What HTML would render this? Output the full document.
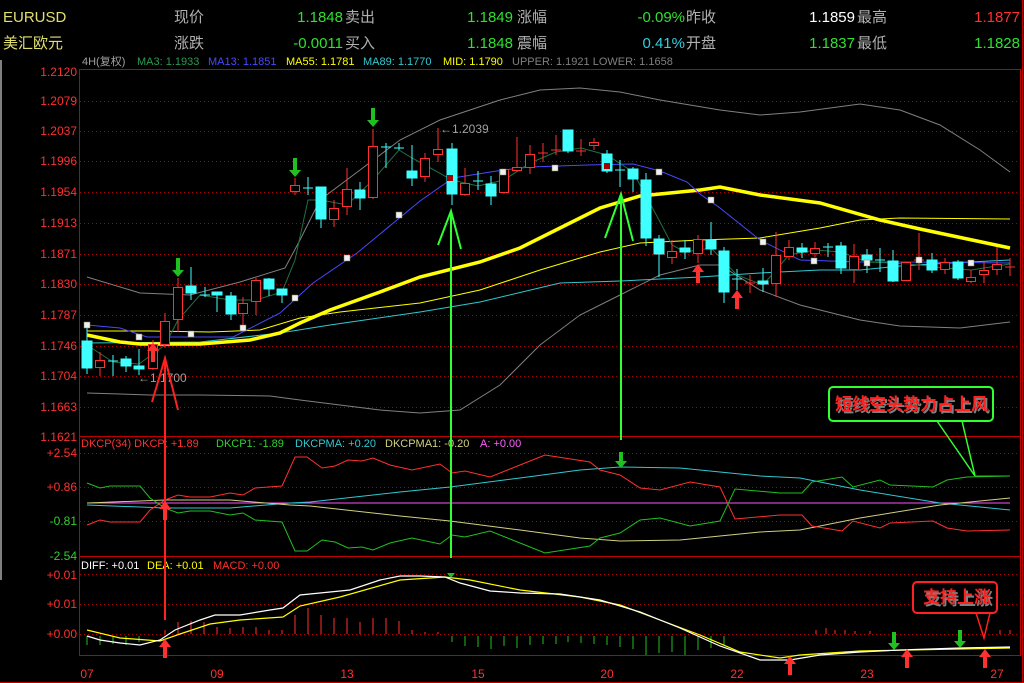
<!DOCTYPE html>
<html><head><meta charset="utf-8"><style>
html,body{margin:0;padding:0;background:#000;width:1024px;height:683px;overflow:hidden}
svg{display:block}
text{font-family:"Liberation Sans","Noto Sans CJK SC",sans-serif}
</style></head><body>
<svg width="1024" height="683" viewBox="0 0 1024 683" xmlns="http://www.w3.org/2000/svg">
<rect width="1024" height="683" fill="#000"/>
<line x1="1" y1="60" x2="1" y2="580" stroke="#808080" stroke-width="2"/>
<!-- header -->
<g font-size="15">
<text x="3" y="22" fill="#e0e070">EURUSD</text>
<text x="174" y="22" fill="#b0b0b0">现价</text>
<text x="343" y="22" fill="#30e030" text-anchor="end">1.1848</text>
<text x="345" y="22" fill="#b0b0b0">卖出</text>
<text x="513" y="22" fill="#30e030" text-anchor="end">1.1849</text>
<text x="517" y="22" fill="#b0b0b0">涨幅</text>
<text x="685" y="22" fill="#30e030" text-anchor="end">-0.09%</text>
<text x="686" y="22" fill="#b0b0b0">昨收</text>
<text x="855" y="22" fill="#ffffff" text-anchor="end">1.1859</text>
<text x="857" y="22" fill="#b0b0b0">最高</text>
<text x="1020" y="22" fill="#ff3030" text-anchor="end">1.1877</text>
<text x="3" y="48" fill="#e0e070">美汇欧元</text>
<text x="174" y="48" fill="#b0b0b0">涨跌</text>
<text x="343" y="48" fill="#30e030" text-anchor="end">-0.0011</text>
<text x="345" y="48" fill="#b0b0b0">买入</text>
<text x="513" y="48" fill="#30e030" text-anchor="end">1.1848</text>
<text x="517" y="48" fill="#b0b0b0">震幅</text>
<text x="685" y="48" fill="#30d0e0" text-anchor="end">0.41%</text>
<text x="686" y="48" fill="#b0b0b0">开盘</text>
<text x="855" y="48" fill="#30e030" text-anchor="end">1.1837</text>
<text x="857" y="48" fill="#b0b0b0">最低</text>
<text x="1020" y="48" fill="#30e030" text-anchor="end">1.1828</text>
</g>
<g font-size="11">
<text x="82" y="65" fill="#a0a0a0">4H(复权)</text>
<text x="137" y="65" fill="#2a9a50">MA3: 1.1933</text>
<text x="208" y="65" fill="#4848ff">MA13: 1.1851</text>
<text x="286" y="65" fill="#ffff00">MA55: 1.1781</text>
<text x="363" y="65" fill="#30c8d0">MA89: 1.1770</text>
<text x="443" y="65" fill="#ffff00">MID: 1.1790</text>
<text x="512" y="65" fill="#808080">UPPER: 1.1921  LOWER: 1.1658</text>
</g>
<!-- frames -->
<g stroke="#c00000" fill="none" stroke-width="1">
<rect x="79.5" y="69.5" width="941" height="586"/>
<line x1="79" y1="436.5" x2="1021" y2="436.5"/>
<line x1="79" y1="556.5" x2="1021" y2="556.5"/>
<line x1="0" y1="682.5" x2="1024" y2="682.5"/>
<line x1="1022.5" y1="0" x2="1022.5" y2="683"/>
</g>
<g stroke="#b00000" stroke-dasharray="1,3" stroke-width="1">
<line x1="80" y1="101.5" x2="1020" y2="101.5"/><line x1="80" y1="131.5" x2="1020" y2="131.5"/>
<line x1="80" y1="161.5" x2="1020" y2="161.5"/><line x1="80" y1="192.5" x2="1020" y2="192.5"/>
<line x1="80" y1="223.5" x2="1020" y2="223.5"/><line x1="80" y1="254.5" x2="1020" y2="254.5"/>
<line x1="80" y1="284.5" x2="1020" y2="284.5"/><line x1="80" y1="315.5" x2="1020" y2="315.5"/>
<line x1="80" y1="346.5" x2="1020" y2="346.5"/><line x1="80" y1="376.5" x2="1020" y2="376.5"/>
<line x1="80" y1="407.5" x2="1020" y2="407.5"/>
<line x1="80" y1="453.5" x2="1020" y2="453.5"/><line x1="80" y1="487.5" x2="1020" y2="487.5"/>
<line x1="80" y1="521.5" x2="1020" y2="521.5"/>
<line x1="80" y1="574.5" x2="1020" y2="574.5"/><line x1="80" y1="604.5" x2="1020" y2="604.5"/>
<line x1="80" y1="634.5" x2="1020" y2="634.5"/>
</g>
<g font-size="12" fill="#ff3030" text-anchor="end">
<text x="77" y="76">1.2120</text><text x="77" y="105">1.2079</text><text x="77" y="135">1.2037</text>
<text x="77" y="165">1.1996</text><text x="77" y="196">1.1954</text><text x="77" y="227">1.1913</text>
<text x="77" y="258">1.1871</text><text x="77" y="288">1.1830</text><text x="77" y="319">1.1787</text>
<text x="77" y="350">1.1746</text><text x="77" y="380">1.1704</text><text x="77" y="411">1.1663</text>
<text x="77" y="441">1.1621</text>
<text x="77" y="457">+2.54</text><text x="77" y="491">+0.86</text>
<text x="77" y="525" fill="#30d030">-0.81</text><text x="77" y="560" fill="#30d030">-2.54</text>
<text x="77" y="579">+0.01</text><text x="77" y="608">+0.01</text><text x="77" y="638">+0.00</text>
</g>
<g font-size="12" fill="#ff3030" text-anchor="middle">
<text x="87" y="678">07</text><text x="217" y="678">09</text><text x="347" y="678">13</text>
<text x="478" y="678">15</text><text x="607" y="678">20</text><text x="737" y="678">22</text>
<text x="867" y="678">23</text><text x="997" y="678">27</text>
</g>
<!-- bands -->
<g fill="none" stroke-width="1">
<polyline stroke="#808080" points="87,277 140,293 190,295 240,282 285,268 300,240 320,200 360,170 400,140 440,120 500,100 540,90 580,88 620,92 660,100 720,110 760,115 800,112 860,104 900,110 940,125 980,150 1010,172"/>
<polyline stroke="#808080" points="87,393 150,395 200,395 270,396 300,400 380,410 420,413 460,410 500,385 540,345 580,315 620,295 660,275 700,265 720,265 760,290 800,305 860,320 900,326 960,328 1010,322"/>
<polyline stroke="#30c8d0" points="87,343 200,342 280,333 330,325 420,312 480,302 560,283 620,281 700,277 760,273 820,270 860,270 900,266 950,263 1010,260"/>
<polyline stroke="#ffff00" points="87,331 150,331 210,332 260,330 300,318 340,312 420,303 480,290 540,270 600,252 640,243 700,240 760,238 820,228 860,220 900,218 1010,219"/>
<polyline stroke="#ffff00" stroke-width="3.5" points="87,335 120,342 140,344 200,344 250,340 280,333 300,323 330,310 380,292 420,277 480,262 520,248 560,228 600,208 640,196 700,190 720,187 760,195 820,203 880,220 920,229 1010,248"/>
<polyline stroke="#4848ff" points="87,325 120,328 147,337 233,337 280,313 313,283 357,253 420,201 453,178 503,170 530,167 587,165 633,164 660,171 687,182 700,194 720,208 760,240 800,260 860,262 907,262 1010,263"/>
<polyline stroke="#207040" points="87,345 113,362 139,364 165,345 178,320 200,295 230,300 256,300 282,292 295,260 308,200 321,200 347,205 373,180 399,150 412,158 425,165 452,180 478,186 504,180 530,163 556,152 581,148 607,155 633,172 646,196 659,220 672,245 685,252 711,248 737,275 763,285 776,270 789,255 815,250 841,252 867,262 893,263 919,265 945,268 971,270 997,266 1010,264"/>
</g>
<!-- candles -->
<g stroke-width="1">
<g stroke="#40ffff" fill="#40ffff">
<line x1="87" y1="327" x2="87" y2="374"/><rect x="82" y="341" width="10" height="27"/>
<line x1="113" y1="355" x2="113" y2="376"/><line x1="108" y1="361" x2="118" y2="361"/>
<line x1="126" y1="356" x2="126" y2="372"/><rect x="121" y="359" width="10" height="7"/>
<line x1="139" y1="349" x2="139" y2="375"/><rect x="134" y="366" width="10" height="3"/>
<line x1="191" y1="267" x2="191" y2="300"/><rect x="186" y="286" width="10" height="7"/>
<line x1="205" y1="287" x2="205" y2="297"/><line x1="200" y1="295" x2="210" y2="295"/>
<line x1="217" y1="292" x2="217" y2="312"/><rect x="212" y="292" width="10" height="3"/>
<line x1="231" y1="292" x2="231" y2="320"/><rect x="226" y="296" width="10" height="18"/>
<line x1="269" y1="278" x2="269" y2="296"/><rect x="264" y="279" width="10" height="10"/>
<line x1="282" y1="289" x2="282" y2="303"/><rect x="277" y="289" width="10" height="6"/>
<line x1="308" y1="177" x2="308" y2="195"/><line x1="303" y1="188" x2="313" y2="188"/>
<line x1="321" y1="187" x2="321" y2="228"/><rect x="316" y="187" width="10" height="32"/>
<line x1="360" y1="182" x2="360" y2="210"/><rect x="355" y="190" width="10" height="8"/>
<line x1="386" y1="143" x2="386" y2="168"/><line x1="381" y1="147" x2="391" y2="147"/>
<line x1="399" y1="143" x2="399" y2="150"/><line x1="394" y1="148" x2="404" y2="148"/>
<line x1="412" y1="145" x2="412" y2="186"/><rect x="407" y="171" width="10" height="7"/>
<line x1="452" y1="143" x2="452" y2="205"/><rect x="447" y="149" width="10" height="45"/>
<line x1="478" y1="171" x2="478" y2="190"/><line x1="473" y1="181" x2="483" y2="181"/>
<line x1="491" y1="176" x2="491" y2="205"/><rect x="486" y="184" width="10" height="12"/>
<line x1="568" y1="130" x2="568" y2="153"/><rect x="563" y="130" width="10" height="21"/>
<line x1="607" y1="150" x2="607" y2="173"/><rect x="602" y="154" width="10" height="17"/>
<line x1="620" y1="160" x2="620" y2="187"/><line x1="615" y1="170" x2="625" y2="170"/>
<line x1="633" y1="167" x2="633" y2="192"/><rect x="628" y="169" width="10" height="10"/>
<line x1="646" y1="173" x2="646" y2="246"/><rect x="641" y="180" width="10" height="58"/>
<line x1="659" y1="235" x2="659" y2="277"/><rect x="654" y="239" width="10" height="15"/>
<line x1="685" y1="240" x2="685" y2="259"/><rect x="680" y="248" width="10" height="4"/>
<line x1="711" y1="222" x2="711" y2="255"/><rect x="706" y="240" width="10" height="9"/>
<line x1="724" y1="247" x2="724" y2="303"/><rect x="719" y="251" width="10" height="41"/>
<line x1="737" y1="269" x2="737" y2="290"/><line x1="732" y1="279" x2="742" y2="279"/>
<line x1="763" y1="268" x2="763" y2="292"/><rect x="758" y="281" width="10" height="3"/>
<line x1="802" y1="243" x2="802" y2="258"/><rect x="797" y="248" width="10" height="4"/>
<line x1="828" y1="243" x2="828" y2="257"/><line x1="823" y1="247" x2="833" y2="247"/>
<line x1="841" y1="242" x2="841" y2="274"/><rect x="836" y="246" width="10" height="22"/>
<line x1="867" y1="249" x2="867" y2="273"/><rect x="862" y="255" width="10" height="5"/>
<line x1="880" y1="248" x2="880" y2="272"/><line x1="875" y1="260" x2="885" y2="260"/>
<line x1="893" y1="250" x2="893" y2="282"/><rect x="888" y="261" width="10" height="20"/>
<line x1="932" y1="253" x2="932" y2="273"/><rect x="927" y="260" width="10" height="10"/>
<line x1="958" y1="260" x2="958" y2="280"/><rect x="953" y="262" width="10" height="16"/>
</g>
<g stroke="#ff3030" fill="#000">
<line x1="100" y1="352" x2="100" y2="376"/><rect x="95.5" y="360.5" width="9" height="7"/>
<line x1="153" y1="340" x2="153" y2="370"/><rect x="148.5" y="344.5" width="9" height="24"/>
<line x1="165" y1="313" x2="165" y2="348"/><rect x="160.5" y="321.5" width="9" height="23"/>
<line x1="178" y1="278" x2="178" y2="332"/><rect x="173.5" y="287.5" width="9" height="32"/>
<line x1="243" y1="297" x2="243" y2="327"/><rect x="238.5" y="303.5" width="9" height="10"/>
<line x1="256" y1="278" x2="256" y2="315"/><rect x="251.5" y="280.5" width="9" height="21"/>
<line x1="295" y1="178" x2="295" y2="195"/><rect x="290.5" y="185.5" width="9" height="6"/>
<line x1="334" y1="200" x2="334" y2="227"/><rect x="329.5" y="208.5" width="9" height="11"/>
<line x1="347" y1="168" x2="347" y2="215"/><rect x="342.5" y="189.5" width="9" height="17"/>
<line x1="373" y1="129" x2="373" y2="199"/><rect x="368.5" y="146.5" width="9" height="51"/>
<line x1="425" y1="153" x2="425" y2="182"/><rect x="420.5" y="158.5" width="9" height="18"/>
<line x1="438" y1="128" x2="438" y2="162"/><rect x="433.5" y="149.5" width="9" height="5"/>
<line x1="465" y1="168" x2="465" y2="196"/><rect x="460.5" y="183.5" width="9" height="11"/>
<line x1="504" y1="169" x2="504" y2="194"/><rect x="499.5" y="169.5" width="9" height="23"/>
<line x1="517" y1="137" x2="517" y2="172"/><rect x="512.5" y="167.5" width="9" height="3"/>
<line x1="530" y1="145" x2="530" y2="174"/><rect x="525.5" y="154.5" width="9" height="13"/>
<line x1="543" y1="143" x2="543" y2="162"/><line x1="538" y1="153" x2="548" y2="153"/>
<line x1="556" y1="135" x2="556" y2="155"/><line x1="551" y1="150" x2="561" y2="150"/>
<line x1="581" y1="139" x2="581" y2="156"/><line x1="576" y1="151" x2="586" y2="151"/>
<line x1="594" y1="138" x2="594" y2="150"/><rect x="589.5" y="142.5" width="9" height="3"/>
<line x1="672" y1="240" x2="672" y2="264"/><rect x="667.5" y="251.5" width="9" height="6"/>
<line x1="698" y1="235" x2="698" y2="263"/><rect x="693.5" y="239.5" width="9" height="14"/>
<line x1="750" y1="275" x2="750" y2="293"/><line x1="745" y1="283" x2="755" y2="283"/>
<line x1="776" y1="232" x2="776" y2="297"/><rect x="771.5" y="255.5" width="9" height="28"/>
<line x1="789" y1="240" x2="789" y2="260"/><rect x="784.5" y="247.5" width="9" height="9"/>
<line x1="815" y1="242" x2="815" y2="257"/><rect x="810.5" y="248.5" width="9" height="5"/>
<line x1="854" y1="244" x2="854" y2="283"/><rect x="849.5" y="256.5" width="9" height="13"/>
<line x1="906" y1="262" x2="906" y2="281"/><rect x="901.5" y="262.5" width="9" height="18"/>
<line x1="919" y1="233" x2="919" y2="270"/><line x1="914" y1="260" x2="924" y2="260"/>
<line x1="945" y1="258" x2="945" y2="274"/><rect x="940.5" y="262.5" width="9" height="7"/>
<line x1="971" y1="270" x2="971" y2="283"/><rect x="966.5" y="277.5" width="9" height="4"/>
<line x1="984" y1="262" x2="984" y2="283"/><rect x="979.5" y="270.5" width="9" height="4"/>
<line x1="997" y1="247" x2="997" y2="275"/><rect x="992.5" y="264.5" width="9" height="5"/>
<line x1="1010" y1="258" x2="1010" y2="276"/><line x1="1005" y1="267" x2="1015" y2="267"/>
</g>
</g>
<!-- SAR squares -->
<g fill="#f0f0f0" stroke="#808060" stroke-width="0.5">
<rect x="84" y="322" width="6" height="6"/><rect x="136" y="334" width="6" height="6"/>
<rect x="188" y="331" width="6" height="6"/><rect x="240" y="325" width="6" height="6"/>
<rect x="292" y="295" width="6" height="6"/><rect x="344" y="255" width="6" height="6"/>
<rect x="396" y="212" width="6" height="6"/><rect x="500" y="169" width="6" height="6"/>
<rect x="552" y="165" width="6" height="6"/><rect x="656" y="169" width="6" height="6"/>
<rect x="708" y="197" width="6" height="6"/><rect x="760" y="239" width="6" height="6"/>
<rect x="811" y="258" width="6" height="6"/><rect x="864" y="260" width="6" height="6"/>
<rect x="916" y="257" width="6" height="6"/><rect x="968" y="260" width="6" height="6"/>
</g>
<rect x="447" y="175" width="6" height="6" fill="#a00000"/><rect x="604" y="163" width="6" height="6" fill="#a00000"/>
<g font-size="12" fill="#a0a0a0">
<text x="138" y="382">←1.1700</text><text x="440" y="133">←1.2039</text>
</g>
<!-- DKCP panel -->
<g font-size="11">
<text x="81" y="447" fill="#ff3030">DKCP(34) DKCP: +1.89</text>
<text x="216" y="447" fill="#30d030">DKCP1: -1.89</text>
<text x="295" y="447" fill="#30c8d0">DKCPMA: +0.20</text>
<text x="385" y="447" fill="#d0d080">DKCPMA1: -0.20</text>
<text x="480" y="447" fill="#ff60ff">A: +0.00</text>
</g>
<g fill="none" stroke-width="1">
<line x1="87" y1="503" x2="1010" y2="503" stroke="#ff50ff"/>
<polyline stroke="#30c8d0" points="87,505 165,508 230,508 290,503 310,502 400,492 450,487 520,478 580,470 620,467 680,468 760,476 800,478 860,490 940,503 1010,510"/>
<polyline stroke="#d0d080" points="87,503 165,500 230,500 290,505 310,506 400,516 450,521 520,530 580,538 620,541 680,540 760,532 800,530 860,518 940,505 1010,498"/>
<polyline stroke="#ff3030" points="87,525 100,520 110,522 140,522 150,510 165,500 178,495 190,497 210,497 230,493 243,495 255,488 282,486 295,457 307,457 322,468 335,466 348,460 362,461 373,458 390,465 412,470 440,464 452,473 465,471 490,477 520,465 545,455 590,462 600,470 620,475 640,488 660,490 690,482 720,487 735,519 780,515 802,515 812,526 842,531 853,521 880,528 890,523 933,521 947,528 967,531 1010,530"/>
<polyline stroke="#20c020" points="87,483 100,488 110,486 140,486 150,498 165,508 178,513 190,511 210,511 230,515 243,513 255,520 282,522 295,551 307,551 322,540 335,542 348,548 362,547 373,550 390,543 412,538 440,544 452,535 465,537 490,531 520,543 545,553 590,546 600,538 620,533 640,520 660,518 690,526 720,521 735,489 780,493 802,493 812,482 842,477 853,487 880,480 890,485 933,487 947,480 967,477 1010,476"/>
</g>
<!-- MACD panel -->
<g font-size="11">
<text x="81" y="569" fill="#ffffff">DIFF: +0.01</text>
<text x="147" y="569" fill="#ffff00">DEA: +0.01</text>
<text x="213" y="569" fill="#ff3030">MACD: +0.00</text>
</g>
<g stroke-width="1">
<g stroke="#ff3030">
<line x1="165" y1="634" x2="165" y2="630"/><line x1="178" y1="634" x2="178" y2="622"/><line x1="191" y1="634" x2="191" y2="621"/>
<line x1="204" y1="634" x2="204" y2="622"/><line x1="217" y1="634" x2="217" y2="627"/><line x1="230" y1="634" x2="230" y2="628"/>
<line x1="243" y1="634" x2="243" y2="627"/><line x1="256" y1="634" x2="256" y2="627"/><line x1="269" y1="634" x2="269" y2="630"/>
<line x1="282" y1="634" x2="282" y2="630"/><line x1="295" y1="634" x2="295" y2="615"/><line x1="308" y1="634" x2="308" y2="608"/>
<line x1="321" y1="634" x2="321" y2="615"/><line x1="334" y1="634" x2="334" y2="618"/><line x1="347" y1="634" x2="347" y2="618"/>
<line x1="360" y1="634" x2="360" y2="622"/><line x1="373" y1="634" x2="373" y2="618"/><line x1="386" y1="634" x2="386" y2="618"/>
<line x1="399" y1="634" x2="399" y2="621"/><line x1="412" y1="634" x2="412" y2="630"/><line x1="425" y1="634" x2="425" y2="632"/>
<line x1="438" y1="634" x2="438" y2="632"/>
<line x1="816" y1="634" x2="816" y2="630"/><line x1="826" y1="634" x2="826" y2="628"/><line x1="835" y1="634" x2="835" y2="630"/>
<line x1="845" y1="634" x2="845" y2="630"/><line x1="855" y1="634" x2="855" y2="631"/><line x1="870" y1="634" x2="870" y2="631"/>
<line x1="1000" y1="634" x2="1000" y2="630"/><line x1="1010" y1="634" x2="1010" y2="630"/>
</g>
<g stroke="#20c020">
<line x1="87" y1="636" x2="87" y2="645"/><line x1="100" y1="636" x2="100" y2="645"/><line x1="113" y1="636" x2="113" y2="644"/>
<line x1="126" y1="636" x2="126" y2="645"/><line x1="139" y1="636" x2="139" y2="642"/>
<line x1="452" y1="636" x2="452" y2="642"/><line x1="465" y1="636" x2="465" y2="646"/><line x1="478" y1="636" x2="478" y2="647"/>
<line x1="491" y1="636" x2="491" y2="649"/><line x1="504" y1="636" x2="504" y2="646"/><line x1="517" y1="636" x2="517" y2="648"/>
<line x1="530" y1="636" x2="530" y2="645"/><line x1="543" y1="636" x2="543" y2="644"/><line x1="556" y1="636" x2="556" y2="644"/>
<line x1="568" y1="636" x2="568" y2="642"/><line x1="581" y1="636" x2="581" y2="643"/><line x1="594" y1="636" x2="594" y2="644"/>
<line x1="607" y1="636" x2="607" y2="645"/><line x1="620" y1="636" x2="620" y2="647"/><line x1="633" y1="636" x2="633" y2="649"/>
<line x1="646" y1="636" x2="646" y2="655"/><line x1="659" y1="636" x2="659" y2="653"/><line x1="672" y1="636" x2="672" y2="652"/>
<line x1="685" y1="636" x2="685" y2="655"/><line x1="698" y1="636" x2="698" y2="650"/><line x1="711" y1="636" x2="711" y2="648"/>
<line x1="724" y1="636" x2="724" y2="645"/>
</g>
</g>
<g fill="none" stroke-width="1.2">
<polyline stroke="#ffff00" points="87,630 120,638 160,641 180,634 210,624 240,620 283,617 300,606 340,597 400,580 445,577 470,580 520,590 580,597 620,605 660,620 700,635 740,652 780,658 800,655 860,651 1010,648"/>
<polyline stroke="#ffffff" points="87,636 100,640 120,643 140,645 160,640 175,630 200,620 215,615 240,615 270,610 283,608 300,595 320,593 350,590 380,580 400,576 420,576 445,577 460,583 490,591 520,593 560,594 600,600 640,612 680,628 720,646 760,660 790,660 820,655 860,652 900,650 960,648 1010,647"/>
</g>
<!-- signal lines -->
<g stroke-width="2" fill="none">
<line x1="165" y1="358" x2="165" y2="620" stroke="#ff2020"/>
<polyline points="152,402 165,358 178,410" stroke="#ff2020"/>
<line x1="451" y1="212" x2="451" y2="558" stroke="#30ff30"/>
<polyline points="438,245 451,211 461,249" stroke="#30ff30"/>
<line x1="621" y1="195" x2="621" y2="440" stroke="#30ff30"/>
<polyline points="605,238 621,194 633,241" stroke="#30ff30"/>
</g>
<!-- arrows -->
<g fill="#20c020">
<path d="M176,258h4v12h4l-6,7l-6,-7h4z"/><path d="M293,158h4v12h4l-6,7l-6,-7h4z"/>
<path d="M371,108h4v12h4l-6,7l-6,-7h4z"/><path d="M619,452h4v9h4l-6,7l-6,-7h4z"/>
<path d="M892,632h4v11h4l-6,7l-6,-7h4z"/><path d="M958,630h4v11h4l-6,7l-6,-7h4z"/>
<path d="M447,573h8l-4,5z"/>
</g>
<g fill="#ff3030">
<path d="M151,362h4v-11h4l-6,-8l-6,8h4z"/><path d="M696,283h4v-11h4l-6,-8l-6,8h4z"/>
<path d="M735,309h4v-11h4l-6,-8l-6,8h4z"/><path d="M163,520h4v-11h4l-6,-8l-6,8h4z"/>
<path d="M163,658h4v-11h4l-6,-8l-6,8h4z"/><path d="M788,675h4v-11h4l-6,-8l-6,8h4z"/>
<path d="M905,668h4v-11h4l-6,-8l-6,8h4z"/><path d="M983,668h4v-11h4l-6,-8l-6,8h4z"/>
</g>
<!-- annotations -->
<rect x="829" y="387" width="164" height="34" rx="4" fill="#000" stroke="#30ff30" stroke-width="2"/>
<polyline points="937,421 975,476 962,421" fill="none" stroke="#30ff30" stroke-width="1.5"/>
<line x1="975" y1="476" x2="1010" y2="476" stroke="#20c020"/>
<text x="837" y="412" font-size="17" font-weight="bold" fill="#808080">短线空头势力占上风</text>
<text x="835" y="410" font-size="17" font-weight="bold" fill="#ff2020">短线空头势力占上风</text>
<rect x="913" y="582" width="84" height="31" rx="4" fill="#000" stroke="#ff2020" stroke-width="2"/>
<polyline points="976,613 984,638 990,613" fill="none" stroke="#ff2020" stroke-width="1.5"/>
<text x="925" y="605" font-size="17" font-weight="bold" fill="#808080">支持上涨</text>
<text x="923" y="603" font-size="17" font-weight="bold" fill="#ff2020">支持上涨</text>
</svg>
</body></html>
